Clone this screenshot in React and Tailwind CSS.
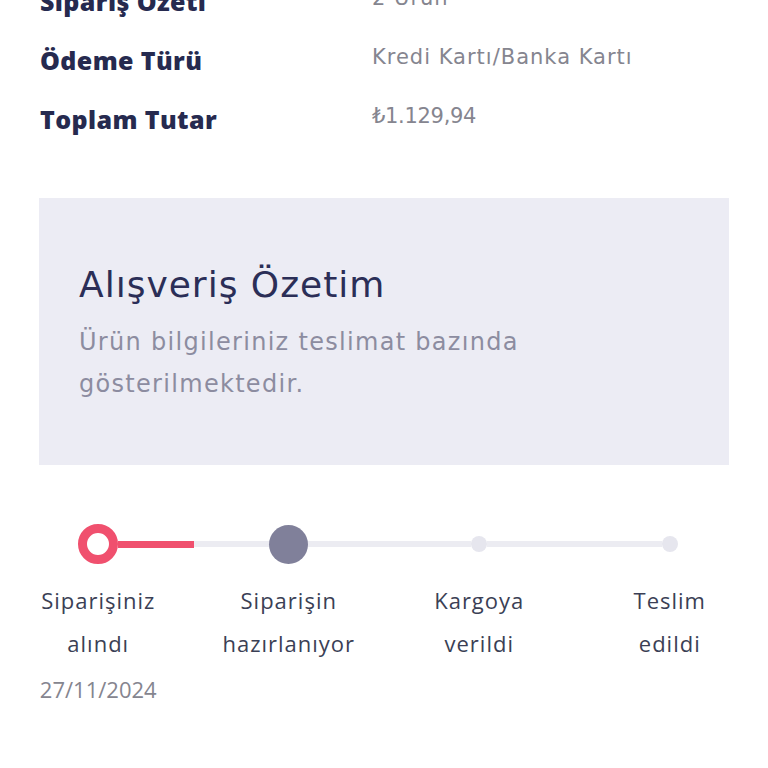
import React from "react";

const rows = [
  ["Sipariş Özeti", "2 Ürün", "tracking-[1px]"],
  ["Ödeme Türü", "Kredi Kartı/Banka Kartı", "tracking-[1px]"],
  ["Toplam Tutar", "₺1.129,94", "tracking-[-0.3px]"],
];

const steps = [
  { l1: "Siparişiniz", l2: "alındı", date: "27/11/2024", kind: "done" },
  { l1: "Siparişin", l2: "hazırlanıyor", kind: "current" },
  { l1: "Kargoya", l2: "verildi", kind: "todo" },
  { l1: "Teslim", l2: "edildi", kind: "todo" },
];

function Dot({ kind }) {
  if (kind === "done")
    return <div className="w-[40px] h-[40px] rounded-full border-[9px] border-[#f0506e] bg-white shrink-0" />;
  if (kind === "current")
    return <div className="w-[39px] h-[39px] rounded-full bg-[#80809a] shrink-0" />;
  return <div className="w-[16px] h-[16px] rounded-full bg-[#e6e6ee] shrink-0" />;
}

export default function App() {
  return (
    <div className="w-[768px] h-[768px] overflow-hidden bg-white" style={{ fontFamily: "'Open Sans', 'Liberation Sans', sans-serif" }}>
      <div className="mt-[-29px] px-[40px]">
        {rows.map(([k, v, tr]) => (
          <div key={k} className="flex items-center h-[59px]">
            <div className="w-[332px] text-[25px] font-extrabold text-[#262a4f] leading-[30px] tracking-[0.4px]">{k}</div>
            <div
              className={"text-[21px] text-[#85858f] leading-[26px] mb-[5px] " + tr}
              style={{ fontFamily: "'DejaVu Sans', sans-serif" }}
            >
              {v}
            </div>
          </div>
        ))}
      </div>

      <div
        className="mx-[39px] mt-[50px] h-[267px] bg-[#ececf4] px-[40px] pt-[66px]"
        style={{ fontFamily: "'DejaVu Sans', sans-serif" }}
      >
        <div className="text-[36px] leading-[41px] text-[#2b2e57] tracking-[1px]">Alışveriş Özetim</div>
        <div className="mt-[16px] text-[24px] leading-[42px] text-[#8c8ca0] w-[520px] tracking-[1.3px]">
          Ürün bilgileriniz teslimat bazında gösterilmektedir.
        </div>
      </div>

      <div className="mt-[59px] px-[3px] grid grid-cols-4">
        {steps.map((s, i) => (
          <div key={i} className="flex flex-col items-center">
            <div className="w-full h-[40px] flex items-center">
              <div className={"flex-1 h-[6px] " + (i === 0 ? "" : "bg-[#ececf2]")} />
              <Dot kind={s.kind} />
              <div
                className={
                  "flex-1 " +
                  (i === 0 ? "h-[7px] bg-[#f0506e]" : i === 3 ? "h-[6px]" : "h-[6px] bg-[#ececf2]")
                }
              />
            </div>
            <div className="mt-[15px] text-center text-[22px] leading-[43px] text-[#3b3f55] tracking-[1px] whitespace-nowrap">
              <div>{s.l1}</div>
              <div>{s.l2}</div>
              {s.date && <div className="mt-[3px] text-[#85858f] tracking-[0px] text-[22px]">{s.date}</div>}
            </div>
          </div>
        ))}
      </div>
    </div>
  );
}
